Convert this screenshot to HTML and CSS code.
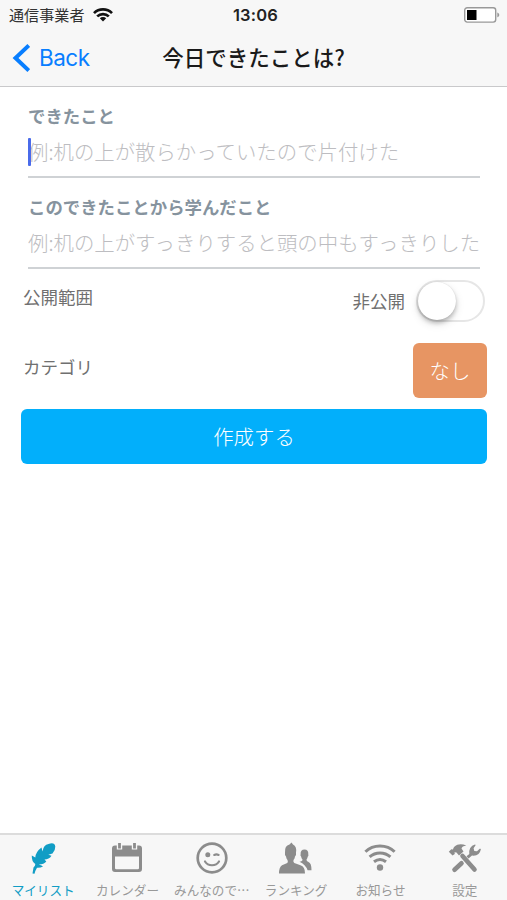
FILE: index.html
```
<!doctype html>
<html lang="ja">
<head>
<meta charset="utf-8">
<title>今日できたことは?</title>
<link rel="stylesheet" href="styles.css">
</head>
<body>
<header class="header">
    <div class="status">
        <div class="carrier">
            <span>通信事業者</span>
            <svg width="20" height="14" viewBox="0 0 20 14">
                <g fill="none" stroke="#111" stroke-width="2.7">
                    <path d="M1 5.1a12.8 12.8 0 0 1 18 0"/>
                    <path d="M4.2 8.4a8.3 8.3 0 0 1 11.6 0"/>
                </g>
                <path fill="#111" d="M10 13.6l-3.2-3.3a4.6 4.6 0 0 1 6.4 0z"/>
            </svg>
        </div>
        <div class="time">13:06</div>
        <svg class="battery" width="36" height="16" viewBox="0 0 36 16">
            <rect x=".7" y=".7" width="31" height="14.4" rx="2.5" fill="#fff" stroke="#999" stroke-width="1.4"/>
            <rect x="3" y="3" width="9.5" height="10" fill="#000"/>
            <path fill="#999" d="M33.3 5.5c2.6.8 2.6 4 0 4.800z"/>
        </svg>
    </div>
    <div class="nav">
        <a href="#" class="back">
            <svg width="18" height="28" viewBox="0 0 18 28">
                <path fill="none" stroke="#087eff" stroke-width="4" d="M16.800 1.500L3.500 14l13.300 12.500"/>
            </svg>
            <span>Back</span>
        </a>
        <h1>今日できたことは?</h1>
    </div>
</header>
<main class="form">
    <div class="field">
        <label for="done">できたこと</label>
        <div class="entry focused">
            <input id="done" type="text" placeholder="例:机の上が散らかっていたので片付けた">
        </div>
    </div>
    <div class="field">
        <label for="learned">このできたことから学んだこと</label>
        <div class="entry">
            <input id="learned" type="text" placeholder="例:机の上がすっきりすると頭の中もすっきりした">
        </div>
    </div>
    <div class="row scope">
        <span>公開範囲</span>
        <div class="choice">
            <span>非公開</span>
            <div class="switch"><div class="knob"></div></div>
        </div>
    </div>
    <div class="row category">
        <span>カテゴリ</span>
        <button type="button" class="none">なし</button>
    </div>
    <button type="button" class="create">作成する</button>
</main>
<nav class="tabs">
    <a href="#" class="tab active">
        <svg width="34" height="34" viewBox="0 0 34 34">
            <path fill="currentColor" d="M6.500 32.500L7.500 26.500Q9.500 24.500 9.300 23Q5.500 20.500 5.800 14.500L9.300 16.500Q9.500 11 15.500 6.500L16.500 10.500Q17.500 3.500 22.500 3Q28.500 .800 29.300 5.500Q29.500 9 26.500 12.500L22.300 13.800L25.500 14.800Q23 18.500 18.500 18.600L20.300 20.500Q18 23.500 12.800 23.500Q16 24.300 17 25.500Q14.500 27 11 26.800Q9.300 29.500 8.500 32.800z"/>
        </svg>
        <span>マイリスト</span>
    </a>
    <a href="#" class="tab">
        <svg width="34" height="34" viewBox="0 0 34 34">
            <path fill="currentColor" fill-rule="evenodd" d="M5 4.500h24q3 0 3 3V28q0 3-3 3H5q-3 0-3-3V7.500q0-3 3-3zM5 15.500V27q0 1.200 1.200 1.200h21.600q1.200 0 1.200-1.200V15.500z"/>
            <path stroke="#f7f7f7" stroke-width="5.400" d="M9.500 2v6.500M24.500 2v6.500"/>
            <path stroke="currentColor" stroke-width="2.800" d="M9.500 2v5.500M24.500 2v5.500"/>
        </svg>
        <span>カレンダー</span>
    </a>
    <a href="#" class="tab">
        <svg width="34" height="34" viewBox="0 0 34 34">
            <circle cx="17" cy="17" r="14.300" fill="none" stroke="currentColor" stroke-width="2.700"/>
            <circle cx="12.800" cy="13.700" r="2.500" fill="currentColor"/>
            <path fill="none" stroke="currentColor" stroke-width="2.200" stroke-linecap="round" d="M19.300 13.900q2-1 4.300 0M10 20.500c3 5 11 5 14 0"/>
        </svg>
        <span>みんなので…</span>
    </a>
    <a href="#" class="tab">
        <svg width="34" height="34" viewBox="0 0 34 34">
            <path fill="currentColor" d="M0 32.500Q0 26 3 24.300L8.300 22Q9.300 21 8.500 19Q7.300 17.500 7 15.500Q5.500 13.500 6 11.500Q5.500 4.500 10.500 3.500L12.500 1.500L14 3.500Q18 5.500 17 11.500Q17.500 14 16 15.500Q15.800 17.500 14.500 19Q14 21 15.300 22L21.500 24.300Q26 25.500 26 32.500z"/>
            <path fill="currentColor" d="M20.500 20.800Q23.500 20.500 23.500 18.500Q22.300 17.300 22.200 15.800Q21 14.500 21.600 13.500Q21.300 8.500 25.500 8.500Q29.600 8.500 29.300 13.500Q29.800 14.800 28.700 15.800Q28.500 17.500 27.500 18.500Q27.300 20.300 29.500 21Q32.500 22 32.500 29.300H28.600Q26.500 23.500 20.500 20.800z"/>
        </svg>
        <span>ランキング</span>
    </a>
    <a href="#" class="tab">
        <svg width="34" height="34" viewBox="0 0 34 34">
            <g fill="none" stroke="currentColor" stroke-width="3">
                <path d="M2.400 10.700C10.300 3 23.700 3 31.600 10.700"/>
                <path d="M6.600 15.900c5.900-5.200 14.900-5.200 20.800 0"/>
                <path d="M11 20.800c3.700-2.900 8.300-2.900 12 0"/>
            </g>
            <circle cx="17" cy="26.500" r="3.200" fill="currentColor"/>
        </svg>
        <span>お知らせ</span>
    </a>
    <a href="#" class="tab">
        <svg width="34" height="34" viewBox="0 0 34 34">
            <path fill="currentColor" d="M.8 10.800L3.300 8.300L5 8.600Q5.500 5.300 9.300 3.700Q13.500 2.300 18.300 4.500Q14 5 13.500 7.500L15.500 10.500L11 14.500L8.500 11.500L6.500 11.300L6.800 13L4.500 14.600z"/>
            <path fill="currentColor" d="M21.300 13Q20.500 5.500 27 3.500L27.700 4L25.600 7.300L26.300 10L29 10.300L32 7.500L32.900 8.300Q31.500 15.500 24 14.600L20.500 17.500L18.500 15.300z"/>
            <path stroke="currentColor" stroke-width="4.600" stroke-linecap="round" d="M14.500 15L26.500 28.500M13.500 22.300L6.500 28.700"/>
        </svg>
        <span>設定</span>
    </a>
</nav>
</body>
</html>
```
FILE: styles.css
```
* { box-sizing: border-box; }
body {
    margin: 0;
    height: 900px;
    display: flex;
    flex-direction: column;
    overflow: hidden;
    background: #fff;
    color: #707070;
    font-family: "Liberation Sans", "Noto Sans CJK JP", sans-serif;
}
svg { display: block; flex: none; }
a { text-decoration: none; }
button {
    border: 0;
    padding: 0 0 2px;
    color: #fff;
    font: 20.400px/30px "Noto Sans CJK JP", sans-serif;
    font-weight: 300;
    border-radius: 6px;
}

.header {
    height: 87px;
    background: #f7f7f7;
    border-bottom: 1px solid #c9c9cb;
}
.status {
    height: 30px;
    padding: 0 7px 0 9px;
    display: grid;
    grid-template-columns: 1fr auto 1fr;
    align-items: center;
    color: #333;
}
.carrier {
    display: flex;
    align-items: center;
    gap: 9px;
    font: 15.100px/28px "Noto Sans CJK JP", sans-serif;
}
.carrier span { padding-bottom: 2px; }
.time {
    padding-left: 2px;
    color: #222;
    font: 600 16.500px/30px Inter, sans-serif;
    letter-spacing: 0.2px;
}
.battery { justify-self: end; }
.nav {
    height: 56px;
    padding: 0 12px;
    display: grid;
    grid-template-columns: 1fr auto 1fr;
    align-items: center;
}
.back {
    display: flex;
    align-items: center;
    gap: 9px;
    color: #087eff;
    font: 22.500px/30px Inter, sans-serif;
    letter-spacing: -0.5px;
}
.nav h1 {
    margin: 0;
    padding-bottom: 2px;
    color: #1a1a1a;
    font: bold 21.500px/30px "Noto Sans CJK JP", sans-serif;
    font-weight: 500;
}

.form {
    flex: 1;
    padding: 0 20px 0 21px;
}
.field {
    height: 91px;
    margin: 0 7px;
    padding-top: 16px;
    border-bottom: 2px solid #cfd2d5;
}
.field label {
    display: block;
    color: #86939e;
    font: bold 17.400px/26px "Noto Sans CJK JP", sans-serif;
}
.entry {
    height: 46px;
    display: flex;
    align-items: center;
    position: relative;
}
.entry.focused::before {
    content: "";
    position: absolute;
    left: 0;
    top: 9px;
    width: 3px;
    height: 28px;
    border-radius: 1px;
    background: #4a6bea;
}
.entry input {
    width: 100%;
    padding: 0 0 2px;
    border: 0;
    outline: 0;
    background: none;
    font: 300 20.400px/30px "Noto Sans CJK JP", sans-serif;
}
.entry input::placeholder { color: #bdbdc1; }

.row {
    display: flex;
    justify-content: space-between;
    padding-left: 2px;
    font: 17.500px/26px "Noto Sans CJK JP", sans-serif;
}
.scope {
    height: 74px;
    padding-top: 11px;
    padding-right: 2px;
}
.scope > span { padding-top: 4px; }
.choice {
    display: flex;
    gap: 11px;
}
.choice span { padding-top: 8px; }
.switch {
    width: 69px;
    height: 42px;
    border: 2px solid #e6e6e6;
    border-radius: 21px;
}
.knob {
    width: 38px;
    height: 38px;
    border-radius: 50%;
    background: #fff;
    box-shadow: 0 0 1px rgba(0,0,0,.15), 0 3px 4px rgba(0,0,0,.22), 0 4px 10px rgba(0,0,0,.12);
}
.category {
    align-items: center;
    height: 55px;
}
.category span { padding-bottom: 7px; }
.none {
    width: 74px;
    height: 55px;
    background: #e79563;
}
.create {
    display: block;
    width: 100%;
    height: 55px;
    margin-top: 11px;
    background: #02affb;
}

.tabs {
    height: 67px;
    padding-left: 1px;
    display: grid;
    grid-template-columns: repeat(6, 1fr);
    background: #f7f7f7;
    border-top: 2px solid #dcdcdc;
}
.tab {
    display: flex;
    flex-direction: column;
    align-items: center;
    padding-top: 6px;
    color: #8c8c8c;
    font: 12.600px/20px "Noto Sans CJK JP", sans-serif;
    white-space: nowrap;
}
.tab span {
    margin-top: 5px;
    color: #999;
}
.tab.active,
.tab.active span { color: #119dc5; }
```
